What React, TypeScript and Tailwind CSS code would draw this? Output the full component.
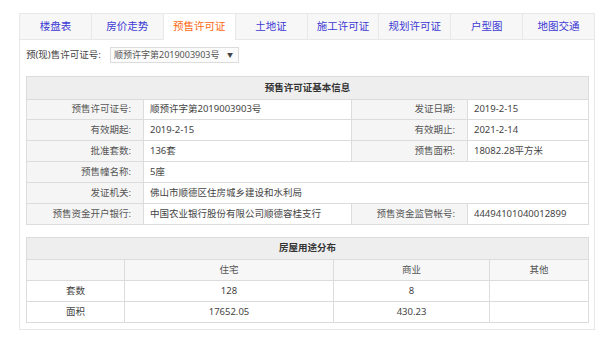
import React from "react";

const tabs = ["楼盘表", "房价走势", "预售许可证", "土地证", "施工许可证", "规划许可证", "户型图", "地图交通"];

const font = { fontFamily: '"Noto Sans", "Noto Sans CJK SC", sans-serif' };

function Label({ children, h }: { children: React.ReactNode; h: string }) {
  return (
    <div className={`${h} flex items-center justify-end pr-[12px] bg-[#f5f5f5] border-r border-b border-[#dcdcdc] text-[#555] whitespace-nowrap`}>
      {children}
    </div>
  );
}

function Value({ children, h, span }: { children?: React.ReactNode; h: string; span?: boolean }) {
  return (
    <div
      className={`${h} flex items-center pl-[6px] bg-white border-r border-b border-[#dcdcdc] text-[#444] whitespace-nowrap ${
        span ? "col-span-3" : ""
      }`}
    >
      {children}
    </div>
  );
}

export default function App() {
  const activeTab = 2;

  return (
    <div className="w-[600px] h-[342px] bg-white overflow-hidden" style={font}>
      <div className="ml-[19px] pt-[13px] w-[576px]">
        {/* tabs */}
        <div className="flex">
          {tabs.map((t, i) => (
            <div
              key={t}
              className={`h-[27px] flex items-center justify-center border-t border-r border-[#e8e8e8] text-[10.5px] ${
                i === 0 ? "w-[73px] border-l" : "w-[72px]"
              } ${i === activeTab ? "bg-white text-[#ff6a13]" : "bg-[#f7f7f7] text-[#3d3ad4] border-b"}`}
            >
              {t}
            </div>
          ))}
        </div>

        <div className="border-l border-r border-b border-[#e8e8e8] pl-[6px] pt-[7px] pb-[6px]">
          {/* select row */}
          <div className="flex items-center h-[16px] text-[9.5px] text-[#444] whitespace-nowrap">
            <span className="w-[84px]">预(现)售许可证号:</span>
            <div className="w-[129px] h-[16px] flex items-center justify-between border border-[#dcdcdc] bg-[#fbfbfb] pl-[3px] pr-[5px] text-[9px] text-[#555]">
              <span>顺预许字第2019003903号</span>
              <span className="text-[6px] text-[#444]">▼</span>
            </div>
          </div>

          {/* table 1 */}
          <div className="mt-[13px] w-[563px] grid grid-cols-[117px_208px_116px_121px] border-l border-t border-[#dcdcdc] text-[9.5px]">
            <div className="col-span-4 h-[23px] flex items-center justify-center bg-[#eeeeee] border-r border-b border-[#dcdcdc] font-bold text-[#333]">
              预售许可证基本信息
            </div>

            <Label h="h-[20px]">预售许可证号:</Label>
            <Value h="h-[20px]">顺预许字第2019003903号</Value>
            <Label h="h-[20px]">发证日期:</Label>
            <Value h="h-[20px]">2019-2-15</Value>

            <Label h="h-[21px]">有效期起:</Label>
            <Value h="h-[21px]">2019-2-15</Value>
            <Label h="h-[21px]">有效期止:</Label>
            <Value h="h-[21px]">2021-2-14</Value>

            <Label h="h-[21px]">批准套数:</Label>
            <Value h="h-[21px]">136套</Value>
            <Label h="h-[21px]">预售面积:</Label>
            <Value h="h-[21px]">18082.28平方米</Value>

            <Label h="h-[21px]">预售幢名称:</Label>
            <Value h="h-[21px]" span>
              5座
            </Value>

            <Label h="h-[21px]">发证机关:</Label>
            <Value h="h-[21px]" span>
              佛山市顺德区住房城乡建设和水利局
            </Value>

            <Label h="h-[21px]">预售资金开户银行:</Label>
            <Value h="h-[21px]">中国农业银行股份有限公司顺德容桂支行</Value>
            <Label h="h-[21px]">预售资金监管帐号:</Label>
            <Value h="h-[21px]">44494101040012899</Value>
          </div>

          {/* table 2 */}
          <div className="mt-[12px] w-[563px] grid grid-cols-[98px_209px_156px_99px] border-l border-t border-[#dcdcdc] text-[9.5px] text-[#444]">
            <div className="col-span-4 h-[22px] flex items-center justify-center bg-[#eeeeee] border-r border-b border-[#dcdcdc] font-bold text-[#333]">
              房屋用途分布
            </div>
            {["", "住宅", "商业", "其他"].map((c, i) => (
              <div
                key={i}
                className="h-[21px] flex items-center justify-center bg-[#f7f7f7] border-r border-b border-[#dcdcdc] text-[#555]"
              >
                {c}
              </div>
            ))}
            {[
              ["套数", "128", "8", ""],
              ["面积", "17652.05", "430.23", ""],
            ].map((row, r) =>
              row.map((c, i) => (
                <div
                  key={`${r}-${i}`}
                  className="h-[21px] flex items-center justify-center bg-white border-r border-b border-[#dcdcdc]"
                >
                  {c}
                </div>
              ))
            )}
          </div>
        </div>
      </div>
    </div>
  );
}
